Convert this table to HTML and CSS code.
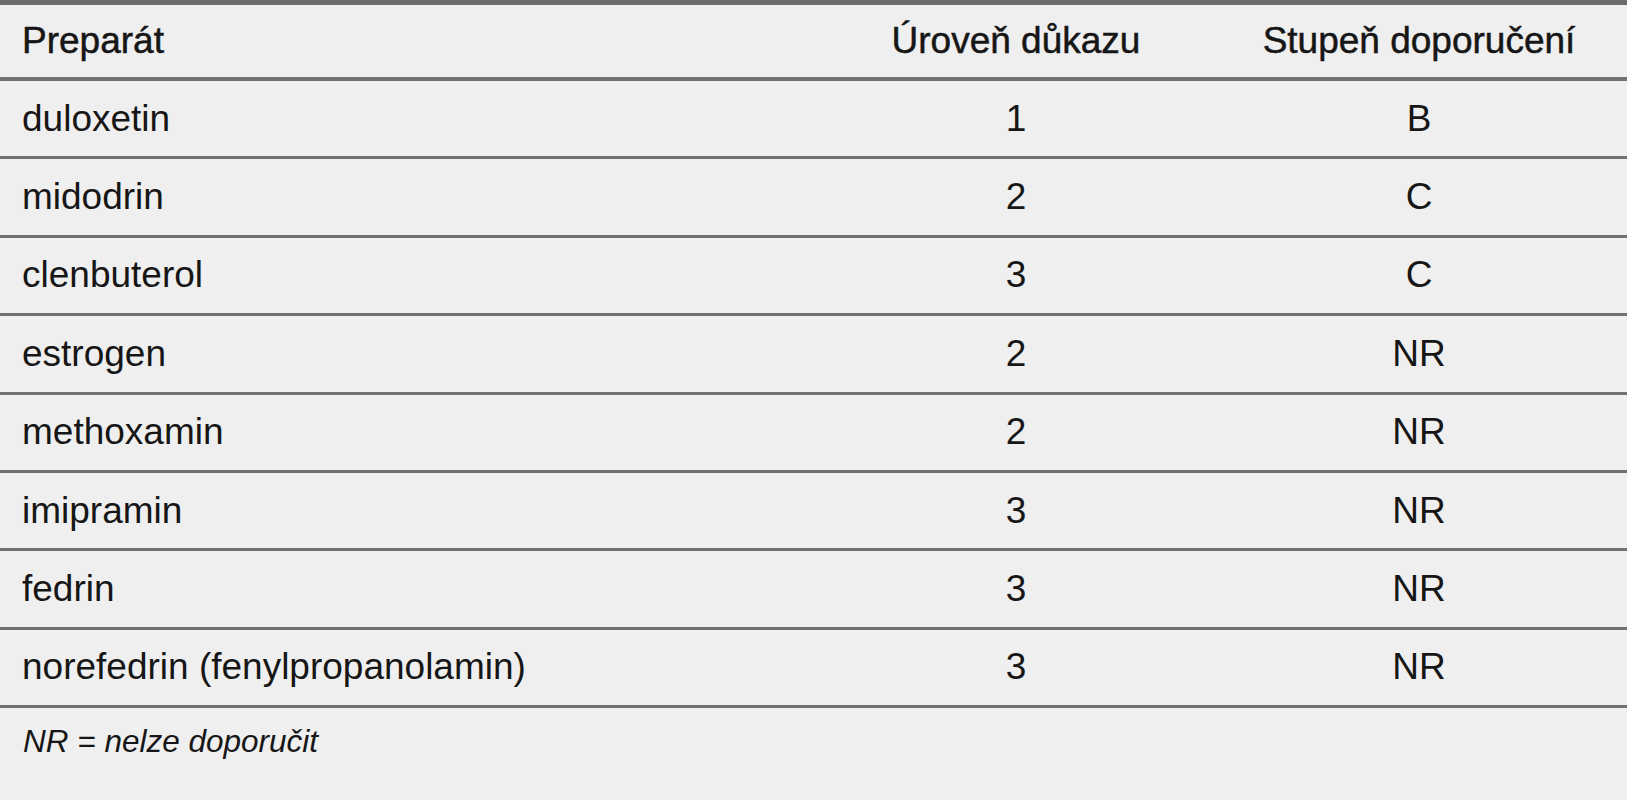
FILE: index.html
```html
<!DOCTYPE html>
<html lang="cs">
<head>
<meta charset="utf-8">
<title>Preparáty</title>
<link rel="stylesheet" href="styles.css">
</head>
<body>
<div class="tbl">
  <div class="row head">
    <div class="c1">Preparát</div>
    <div class="c2">Úroveň důkazu</div>
    <div class="c3">Stupeň doporučení</div>
  </div>
  <div class="row"><div class="c1">duloxetin</div><div class="c2">1</div><div class="c3">B</div></div>
  <div class="row"><div class="c1">midodrin</div><div class="c2">2</div><div class="c3">C</div></div>
  <div class="row"><div class="c1">clenbuterol</div><div class="c2">3</div><div class="c3">C</div></div>
  <div class="row"><div class="c1">estrogen</div><div class="c2">2</div><div class="c3">NR</div></div>
  <div class="row"><div class="c1">methoxamin</div><div class="c2">2</div><div class="c3">NR</div></div>
  <div class="row"><div class="c1">imipramin</div><div class="c2">3</div><div class="c3">NR</div></div>
  <div class="row"><div class="c1">fedrin</div><div class="c2">3</div><div class="c3">NR</div></div>
  <div class="row"><div class="c1">norefedrin (fenylpropanolamin)</div><div class="c2">3</div><div class="c3">NR</div></div>
  <div class="note">NR = nelze doporučit</div>
</div>
</body>
</html>
```

FILE: styles.css
```css
html, body {
  margin: 0;
  padding: 0;
  background: #efefef;
}
body {
  font-family: "Liberation Sans", Arial, sans-serif;
  color: #161616;
  height: 800px;
  overflow: hidden;
}
.tbl {
  border-top: 5px solid #6c6c6c;
}
.row {
  display: grid;
  grid-template-columns: 821px 390px 1fr;
  align-items: center;
  height: 75.4px;
  border-bottom: 3px solid #707070;
  font-size: 37px;
  line-height: 40px;
}
.row.head {
  height: 72px;
  border-bottom-width: 4px;
  -webkit-text-stroke: 0.5px #161616;
}
.c1 {
  padding-left: 22px;
  white-space: nowrap;
}
.c2, .c3 {
  text-align: center;
  white-space: nowrap;
}
.note {
  font-style: italic;
  font-size: 31.5px;
  line-height: 36px;
  padding: 15px 0 0 23px;
}
```
